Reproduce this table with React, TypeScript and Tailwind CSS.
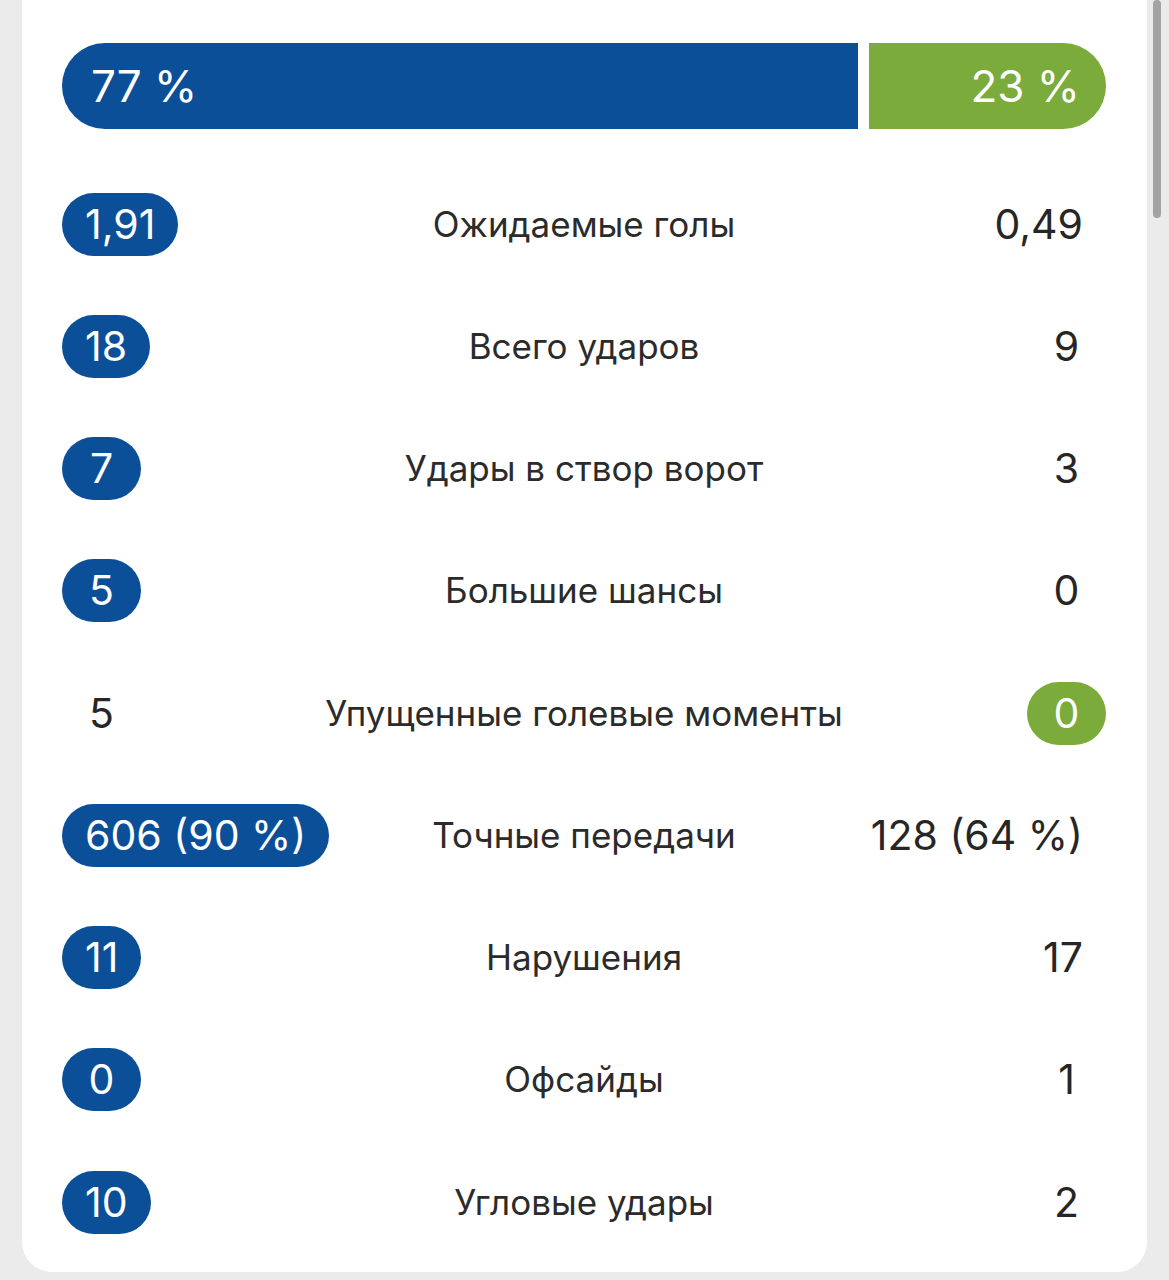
import React from "react";

type Row = { l: string; label: string; r: string; hl: "l" | "r" };

const rows: Row[] = [
  { l: "1,91", label: "Ожидаемые голы", r: "0,49", hl: "l" },
  { l: "18", label: "Всего ударов", r: "9", hl: "l" },
  { l: "7", label: "Удары в створ ворот", r: "3", hl: "l" },
  { l: "5", label: "Большие шансы", r: "0", hl: "l" },
  { l: "5", label: "Упущенные голевые моменты", r: "0", hl: "r" },
  { l: "606 (90 %)", label: "Точные передачи", r: "128 (64 %)", hl: "l" },
  { l: "11", label: "Нарушения", r: "17", hl: "l" },
  { l: "0", label: "Офсайды", r: "1", hl: "l" },
  { l: "10", label: "Угловые удары", r: "2", hl: "l" },
];

function Pill({ v, kind }: { v: string; kind: "blue" | "green" | "none" }) {
  const cls =
    kind === "blue"
      ? "bg-[#0b4f99] text-white"
      : kind === "green"
      ? "bg-[#7aab3b] text-white"
      : "text-[#262626]";
  return (
    <div
      className={`h-[63px] min-w-[79px] px-[23px] rounded-full flex items-center justify-center text-[41px] leading-none ${cls}`}
    >
      {v}
    </div>
  );
}

export default function App() {
  return (
    <div
      className="relative w-[1169px] h-[1280px] bg-[#ebebeb] overflow-hidden"
      style={{ fontFamily: "Inter, 'Noto Sans', sans-serif" }}
    >
      <div className="ml-[22px] w-[1125px] h-[1272px] bg-white rounded-b-[30px] pt-[43px] pl-[40px] pr-[41px]">
        <div className="flex gap-[11px] h-[86px]">
          <div className="w-[796px] shrink-0 bg-[#0b4f99] rounded-l-full flex items-center pl-[29px] text-white text-[44px] leading-none">
            77 %
          </div>
          <div className="flex-1 bg-[#7aab3b] rounded-r-full flex items-center justify-end pr-[26px] text-white text-[44px] leading-none">
            23 %
          </div>
        </div>
        <div className="mt-[34px] flex flex-col">
          {rows.map((r, i) => (
            <div key={i} className="h-[122.25px] grid grid-cols-[1fr_auto_1fr] items-center">
              <div className="flex justify-start">
                <Pill v={r.l} kind={r.hl === "l" ? "blue" : "none"} />
              </div>
              <div className="text-[35px] text-[#2b2b2b] leading-none text-center px-4">
                {r.label}
              </div>
              <div className="flex justify-end">
                <Pill v={r.r} kind={r.hl === "r" ? "green" : "none"} />
              </div>
            </div>
          ))}
        </div>
      </div>
      <div className="absolute left-[1153px] top-0 w-[8px] h-[218px] rounded-full bg-[#a3a3a3]" />
    </div>
  );
}
